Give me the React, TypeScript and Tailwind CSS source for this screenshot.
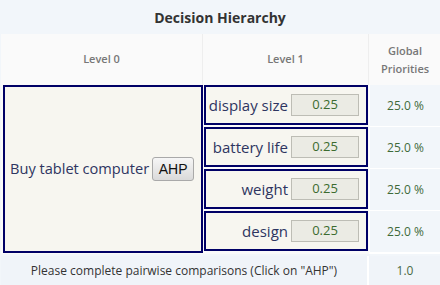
const font = { fontFamily: '"Open Sans", "DejaVu Sans", sans-serif' };

const criteria = ["display size", "battery life", "weight", "design"];

function AhpButton() {
  return (
    <button
      className="h-[24px] w-[42px] border border-[#a9a9a9] rounded-[3px] bg-gradient-to-b from-[#f6f6f6] to-[#dadada] text-[14px] font-normal text-[#111] leading-none"
      style={{ fontFamily: '"Liberation Sans", Arial, sans-serif' }}
    >
      AHP
    </button>
  );
}

export default function App() {
  return (
    <div className="w-[440px] h-[285px] bg-[#f2f6fa] text-[#333]" style={font}>
      <div className="h-[34px] flex items-center justify-center text-[14px] font-bold text-[#333]">
        Decision Hierarchy
      </div>

      <div className="grid grid-cols-[202px_166px_72px] pl-[1px]">
        {/* header */}
        <div className="h-[51px] flex items-center justify-center bg-[#fafafa] border-r border-[#eeeeee] text-[11px] font-semibold text-[#777]">
          Level 0
        </div>
        <div className="h-[51px] flex items-center justify-center bg-[#fafafa] border-r border-[#eeeeee] text-[11px] font-semibold text-[#777]">
          Level 1
        </div>
        <div className="h-[51px] flex items-center justify-center bg-[#fafafa] text-center text-[11px] font-semibold text-[#777] leading-[18px]">
          Global
          <br />
          Priorities
        </div>

        {/* body */}
        <div className="bg-[#fafafa] pl-[2px] pb-[1px]">
          <div className="h-[168px] border-2 border-[#000066] bg-[#f7f6f0] flex items-center pl-[5px] gap-[3px] text-[14.6px] text-[#2e3561]">
            <span>Buy tablet computer</span>
            <AhpButton />
          </div>
        </div>
        <div className="bg-[#fafafa] pl-[1px] pr-[1px] flex flex-col gap-[2px]">
          {criteria.map((c) => (
            <div
              key={c}
              className="h-[40px] border-2 border-[#000066] bg-[#f7f6f0] flex items-center justify-end gap-[3px] pr-[7px] text-[15px] text-[#2e3561]"
            >
              <span>{c}</span>
              <div className="w-[68px] h-[22px] border border-[#bdbdb5] bg-[#ebebe4] flex items-center justify-center text-[13px] text-[#3b6b2f]">
                0.25
              </div>
            </div>
          ))}
        </div>
        <div className="flex flex-col gap-[1px] bg-white pl-[1px]">
          {criteria.map((c) => (
            <div
              key={c}
              className="h-[41px] flex items-center justify-center bg-[#f2f6fa] text-[12px] text-[#3f6a3a]"
            >
              25.0 %
            </div>
          ))}
        </div>

        {/* footer */}
        <div className="col-span-2 h-[30px] mt-[2px] flex items-center justify-center bg-[#f0f4f9] border-r-2 border-white text-[12px] text-[#333]">
          Please complete pairwise comparisons (Click on "AHP")
        </div>
        <div className="h-[30px] mt-[2px] flex items-center justify-center bg-[#f0f4f9] text-[12px] text-[#4a6a44]">
          1.0
        </div>
      </div>
    </div>
  );
}
